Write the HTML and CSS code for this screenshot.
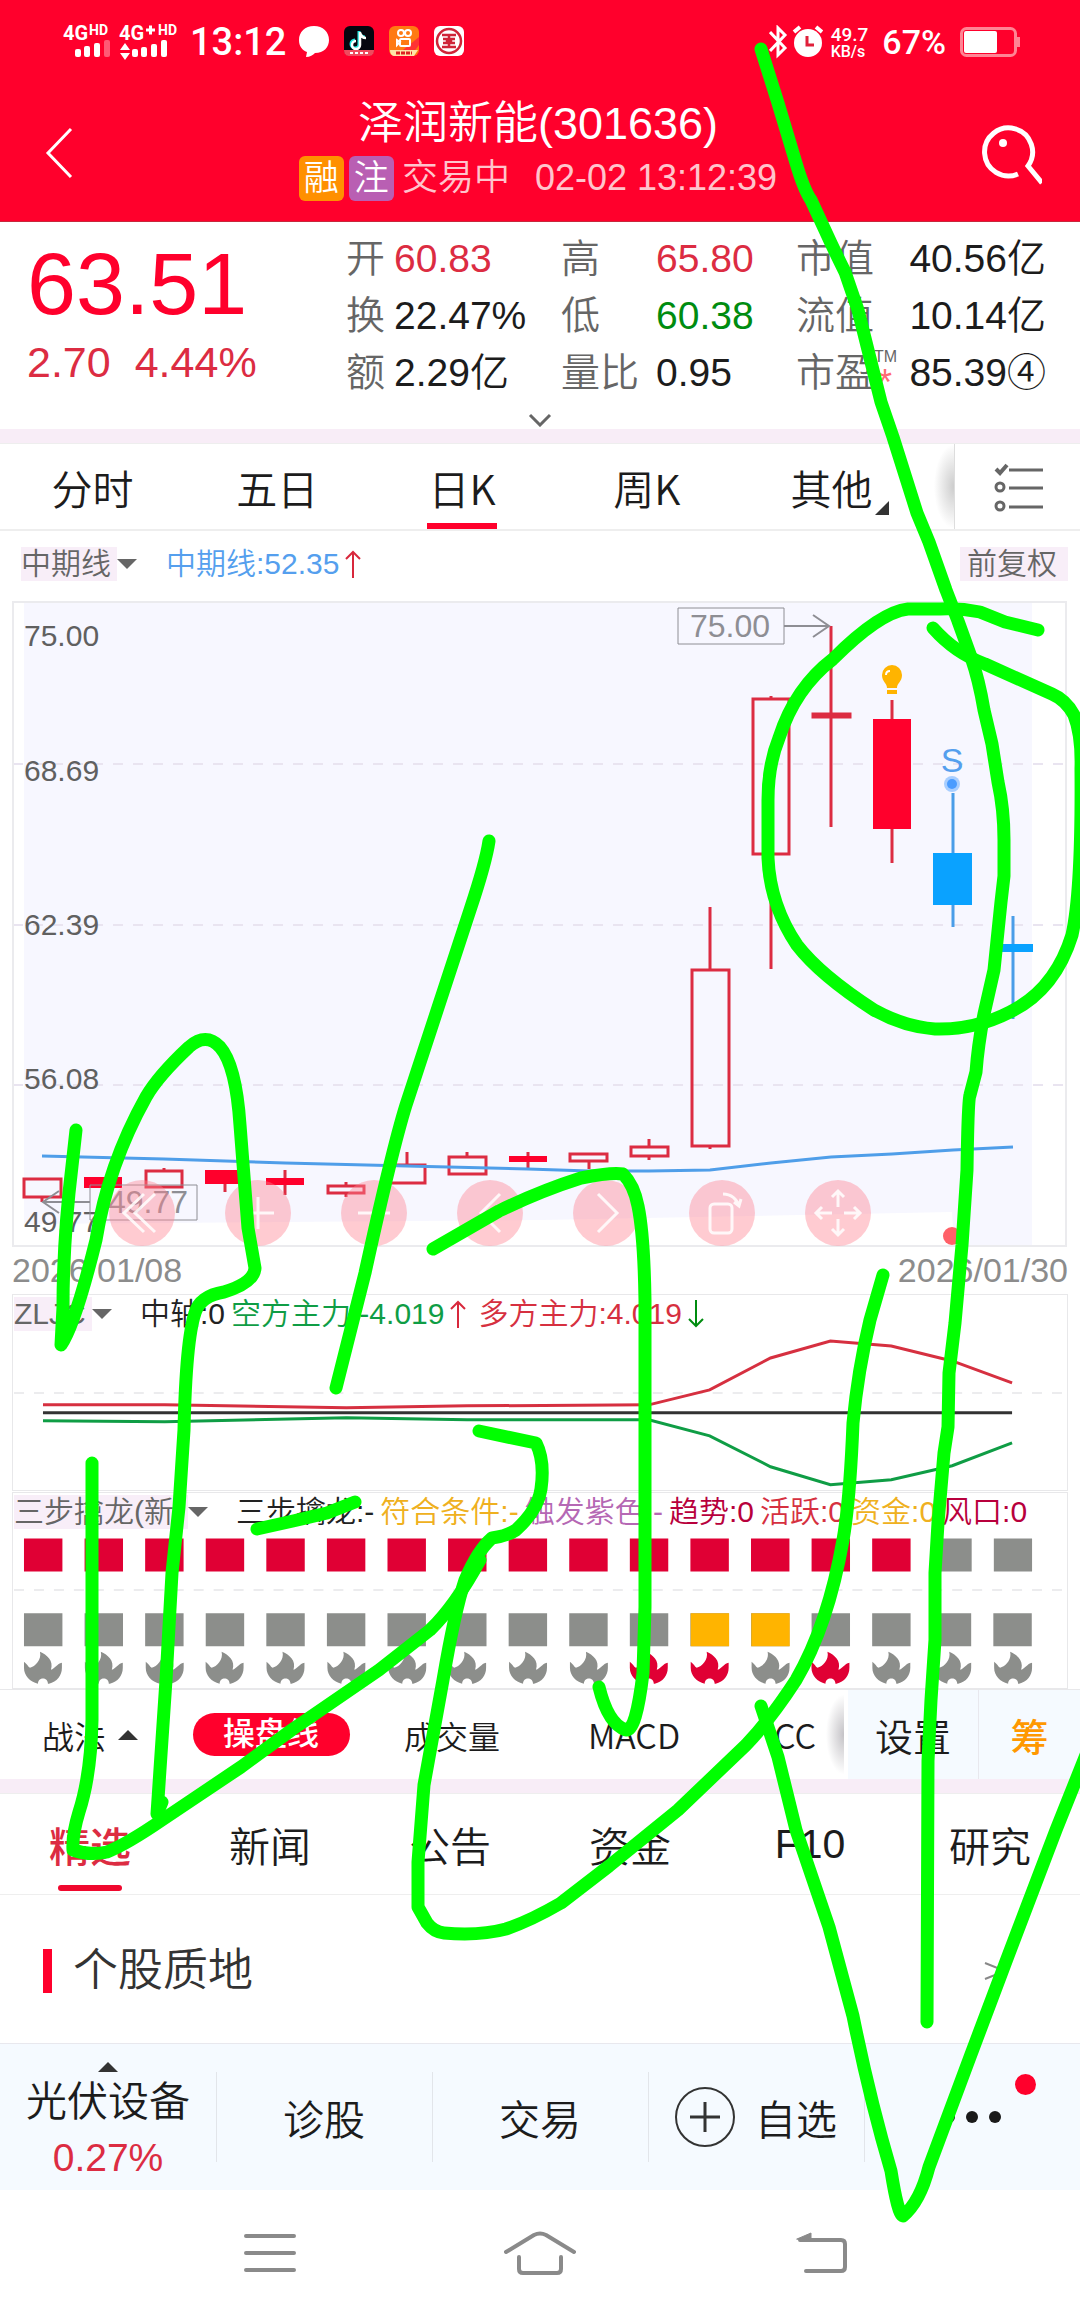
FILE: index.html
```
<!DOCTYPE html>
<html lang="zh-CN">
<head>
<meta charset="utf-8">
<meta name="viewport" content="width=device-width, initial-scale=1">
<title>泽润新能(301636)</title>
<link rel="stylesheet" href="styles.css">
</head>
<body>
<div class="app">
  <header class="header">
    <div class="status">
      <svg class="signal" width="122" height="48" viewBox="0 -6 122 48" fill="#fff">
        <text class="net" x="1" y="16">4G</text><text class="hd" x="27" y="11">HD</text>
        <rect x="13" y="25" width="6" height="8" rx="2"/><rect x="22" y="22" width="6" height="11" rx="2"/><rect x="32" y="19" width="6" height="14" rx="2"/><rect x="42" y="16" width="6" height="17" rx="2" opacity=".35"/>
        <text class="net" x="57" y="16">4G</text><path d="M84 6h9M88.500 1.500v9" stroke="#fff" stroke-width="3"/><text class="hd" x="96" y="11">HD</text>
        <path d="M58 26l5-7 5 7zM58 29l5 7 5-7z"/>
        <rect x="70" y="25" width="6" height="8" rx="2"/><rect x="79" y="23" width="6" height="10" rx="2"/><rect x="89" y="20" width="6" height="13" rx="2"/><rect x="99" y="16" width="6" height="17" rx="2"/>
      </svg>
      <span class="clock">13:12</span>
      <svg class="apps" width="168" height="34" viewBox="0 0 168 34">
        <path fill="#fff" d="M16 1C7 1 1 7 1 15c0 6 3 10 8 12l-1 5c4 0 7-2 9-4 9 0 14-6 14-13C31 7 25 1 16 1z"/>
        <rect x="46" y="1" width="30" height="30" rx="6" fill="#060610"/>
        <path d="M61 6v13a4 4 0 1 1-4-4M61 7c1 3 3 5 6 5" fill="none" stroke="#24e5e0" stroke-width="3"/>
        <path d="M62 7v13a4 4 0 1 1-4-4M62 8c1 3 3 5 6 5" fill="none" stroke="#fff" stroke-width="2.500"/>
        <path d="M46 25h30c0 4-2 6-6 6H52c-4 0-6-2-6-6z" fill="#f04a5e"/><path d="M52 28h18" stroke="#fff" stroke-width="2" stroke-dasharray="3 2"/>
        <rect x="91" y="1" width="30" height="30" rx="6" fill="#ff7a12"/><path d="M105 25l16-13v8l-6 8z" fill="#f33"/>
        <g fill="none" stroke="#fff" stroke-width="2"><circle cx="103" cy="8" r="3"/><circle cx="110" cy="8" r="3"/><rect x="102" y="14" width="10" height="7" rx="1"/><path d="M102 17l-3-2v5z"/></g>
        <path d="M92 25h28l-4 6H97c-3 0-5-2-5-6z" fill="#ffe3a8"/><path d="M98 28h16" stroke="#d22" stroke-width="3" stroke-dasharray="4 1"/>
        <rect x="136" y="1" width="30" height="30" rx="6" fill="#fff"/>
        <g fill="none" stroke="#cf2438" stroke-width="2.500"><circle cx="151" cy="16" r="12"/><path d="M144 10h14M144 22h14M151 10v12M145 14h4v4h-4M157 14h-4v4h4"/></g>
      </svg>
      <svg class="bt" width="54" height="34" viewBox="0 0 54 34" fill="none" stroke="#fff" stroke-width="3">
        <path d="M1 7l15 16-7 7V3l7 7L1 26"/>
        <circle cx="39" cy="18" r="14" fill="#fff" stroke="none"/><path d="M25 7l6-5M53 7l-6-5" stroke-width="4"/><path d="M38 11v9h7" stroke="#e0203a"/>
      </svg>
      <span class="speed"><span>49.7</span><span class="unit">KB/s</span></span>
      <span class="percent">67%</span>
      <svg class="battery" width="60" height="30" viewBox="0 0 60 30"><rect x="1.500" y="1.500" width="54" height="27" rx="5" fill="none" stroke="#ff8494" stroke-width="3"/><rect x="4" y="4" width="33" height="22" rx="2" fill="#fff"/><rect x="57" y="10" width="3" height="10" fill="#ff8494"/></svg>
    </div>
    <div class="titlebar">
      <button class="back" aria-label="返回"><svg width="28" height="52" viewBox="0 0 28 52"><path d="M26 2L3 26l23 24" fill="none" stroke="#fff" stroke-width="3"/></svg></button>
      <div class="title">
        <h1>泽润新能(301636)</h1>
        <p><i class="tag margin">融</i><i class="tag reg">注</i><span>交易中</span><time>02-02 13:12:39</time></p>
      </div>
      <button class="search" aria-label="搜索"><svg width="60" height="62" viewBox="0 0 60 62" fill="none" stroke="#fff" stroke-width="5"><path d="M36 51a24 24 0 1 1 10-8l14 17"/><circle cx="21" cy="20" r="4" fill="#fff" stroke="none"/></svg></button>
    </div>
  </header>

  <section class="quote">
    <div class="price"><strong>63.51</strong><p><span>2.70</span><span>4.44%</span></p></div>
    <dl class="facts">
      <div><dt>开</dt><dd class="up">60.83</dd></div>
      <div><dt>高</dt><dd class="up">65.80</dd></div>
      <div><dt>市值</dt><dd>40.56亿</dd></div>
      <div><dt>换</dt><dd>22.47%</dd></div>
      <div><dt>低</dt><dd class="down">60.38</dd></div>
      <div><dt>流值</dt><dd>10.14亿</dd></div>
      <div><dt>额</dt><dd>2.29亿</dd></div>
      <div><dt>量比</dt><dd>0.95</dd></div>
      <div><dt>市盈<span class="mark"><span>TM</span><b>*</b></span></dt><dd>85.39④</dd></div>
    </dl>
    <button class="expand" aria-label="展开"><svg width="24" height="14" viewBox="0 0 24 14"><path d="M2 2l10 10L22 2" fill="none" stroke="#666" stroke-width="3"/></svg></button>
  </section>

  <nav class="periods">
    <div class="period-list">
      <button>分时</button><button>五日</button><button class="on">日K</button><button>周K</button><button class="more">其他</button>
    </div>
    <button class="list" aria-label="指标列表"><svg width="50" height="50" viewBox="0 0 50 50" fill="none" stroke="#666" stroke-width="3"><path d="M2 7l4 4 7-8" stroke-width="4"/><circle cx="6" cy="25" r="4"/><circle cx="6" cy="44" r="4"/><path d="M15 8h34M15 26h34M15 45h34" /></svg></button>
  </nav>

  <main>
    <div class="legend main-legend">
      <button class="pick">中期线</button><i class="caret"></i>
      <span class="blue ma">中期线:52.35<svg class="arrow rise" width="16" height="28" viewBox="0 0 16 28"><path d="M8 28V2M1 9l7-7 7 7"/></svg></span>
      <button class="adjust">前复权</button>
    </div>
    <div class="chart">
      <svg class="plot" viewBox="0 600 1080 648" fill="none">
        <path d="M24 602H1032V1246H954L952 1212 540 1220 24 1224z" fill="#f7f7ff"/>
        <path d="M13 764H1066M13 925H1066M13 1085H1066" stroke="#e9e4f0" stroke-width="2" stroke-dasharray="10 10"/>
        <rect x="13" y="602" width="1053" height="644" stroke="#ebebee" stroke-width="2"/>
        <g stroke="#dc2c42" stroke-width="3">
          <path d="M42 1198v4M103 1188v8M164 1168v2M225 1183v9M285 1170v25M346 1182v3M346 1193v4M407 1152v13M467 1152v4M528 1152v16M589 1161v8M649 1139v7M649 1157v3M710 907v62M710 1146v3M771 696v3M771 854v115M831 626v201M892 700v163"/>
          <path d="M24 1179h37v18H24zM146 1171h36v16h-36zM328 1186h36v7h-36zM389 1165h36v18h-36zM449 1157h37v17h-37zM570 1154h37v7h-37zM631 1147h37v9h-37zM692 970h37v176h-37zM753 699h36v155h-36zM813 714h37v3h-37z"/>
        </g>
        <path d="M84 1177h38v11H84zM205 1170h39v14h-39zM266 1178h38v7h-38zM509 1156h38v6h-38zM873 719h38v110h-38z" fill="#ff002c"/>
        <path d="M953 793v134M1013 916v103" stroke="#4a9de8" stroke-width="3"/>
        <path d="M933 853h39v52h-39zM994 944h39v8h-39z" fill="#0aa2ff"/>
        <path d="M42 1156L164 1159 285 1163 407 1166 528 1169 589 1171 649 1171 710 1170 771 1163 831 1157 892 1154 953 1150 1013 1147" stroke="#4f9ee9" stroke-width="3"/>
        <g fill="#606060" class="axis"><text x="24" y="646">75.00</text><text x="24" y="781">68.69</text><text x="24" y="935">62.39</text><text x="24" y="1089">56.08</text><text x="24" y="1232">49.77</text></g>
        <g stroke="#8e8e94" stroke-width="2"><path d="M678 608h106v36H678zM90 1185h107v35H90z" stroke-width="1"/><path d="M784 626h44M813 615l16 11-16 11M90 1202H44M59 1191l-16 11 16 11"/></g>
        <g fill="#8e8e94" class="mark-text"><text x="690" y="637">75.00</text><text x="108" y="1213">49.77</text></g>
        <path d="M887 688c0-5-5-6-5-13a10 10 0 0 1 20 0c0 7-5 8-5 13zM887 690h10v4h-10z" fill="#ffb400"/><path d="M886 675c0-3 2-4 4-4" stroke="#fff" stroke-width="2"/>
        <text x="952" y="772" class="sell" text-anchor="middle" fill="#559fee">S</text>
        <circle cx="952" cy="784" r="8" fill="#a8ceff"/><circle cx="952" cy="784" r="5" fill="#4a9cff"/>
        <circle cx="952" cy="1236" r="9" fill="#ff6068"/>
      </svg>
      <div class="tools">
        <button aria-label="快退"><svg viewBox="0 0 66 66"><path d="M35 14L15 33l20 19M46 14L26 33l20 19"/></svg></button>
        <button aria-label="放大"><svg viewBox="0 0 66 66"><path d="M33 17v32M17 33h32"/></svg></button>
        <button aria-label="缩小"><svg viewBox="0 0 66 66"><path d="M17 33h32"/></svg></button>
        <button aria-label="左移"><svg viewBox="0 0 66 66"><path d="M43 14L24 33l19 19"/></svg></button>
        <button aria-label="右移"><svg viewBox="0 0 66 66"><path d="M25 14l19 19-19 19"/></svg></button>
        <button aria-label="旋转"><svg viewBox="0 0 66 66"><rect x="21" y="24" width="22" height="29" rx="4"/><path d="M34 14c8 0 14 5 16 12M45 22l5 4 2-7"/></svg></button>
        <button aria-label="全屏"><svg viewBox="0 0 66 66"><path d="M33 27V11M27 17l6-6 6 6M33 39v16M27 49l6 6 6-6M27 33H11M17 27l-6 6 6 6M39 33h16M49 27l6 6-6 6"/></svg></button>
      </div>
    </div>
    <div class="dates"><time>2026/01/08</time><time>2026/01/30</time></div>

    <section class="panel">
      <div class="legend">
        <button class="pick zljc">ZLJC</button><i class="caret"></i>
        <span class="first">中轴:0</span><span class="green">空方主力:-4.019<svg class="arrow rise" width="16" height="28" viewBox="0 0 16 28"><path d="M8 28V2M1 9l7-7 7 7"/></svg></span><span class="red wide">多方主力:4.019<svg class="arrow fall" width="16" height="28" viewBox="0 0 16 28"><path d="M8 0v26M1 19l7 7 7-7"/></svg></span>
      </div>
      <svg class="plot" viewBox="12 1332 1056 158" fill="none" stroke-width="3">
        <path d="M13 1393H1066" stroke="#ececee" stroke-width="2" stroke-dasharray="10 10"/>
        <path d="M42 1405L164 1405 225 1406 346 1408 467 1406 649 1405 710 1390 771 1358 831 1341 892 1346 953 1361 1013 1383" stroke="#d63040"/>
        <path d="M42 1413H1013" stroke="#333"/>
        <path d="M42 1421L164 1422 346 1418 467 1420 649 1420 710 1436 771 1467 831 1485 892 1480 953 1466 1013 1443" stroke="#0f9d45"/>
      </svg>
    </section>

    <section class="panel">
      <div class="legend">
        <button class="pick dragon">三步擒龙(新</button><i class="caret"></i>
        <span class="first">三步擒龙:-</span><span class="gold">符合条件:-</span><span class="violet">触发紫色:-</span><span class="wine">趋势:0</span><span class="red">活跃:0</span><span class="gold">资金:0</span><span class="wine">风口:0</span>
      </div>
      <svg class="plot" viewBox="12 1530 1056 156">
        <defs><path id="flame" d="M0 10C3 12 4 15 6 16 11 15 18 8 16 0c7 3 14 9 11 18 4-1 6-6 11-7v5c0 8-5 14-13 16h-1c0-7-10-7-10 0C6 30 0 24 0 16z"/></defs>
        <path d="M13 1590H1066" stroke="#ececee" stroke-width="2" stroke-dasharray="10 10"/>
        <g stroke-width="33">
          <path d="M23 1555H912" stroke="#e00034" stroke-dasharray="38.500 22.200"/>
          <path d="M934 1555H1033M23 1630H1033" stroke="#8c8e8b" stroke-dasharray="38.500 22.200"/>
          <path d="M691 1630H791" stroke="#ffb400" stroke-dasharray="38.500 22.200"/>
        </g>
        <g fill="#8c8e8b"><use href="#flame" x="23" y="1652"/><use href="#flame" x="84" y="1652"/><use href="#flame" x="145" y="1652"/><use href="#flame" x="205" y="1652"/><use href="#flame" x="266" y="1652"/><use href="#flame" x="327" y="1652"/><use href="#flame" x="388" y="1652"/><use href="#flame" x="448" y="1652"/><use href="#flame" x="509" y="1652"/><use href="#flame" x="570" y="1652"/><use href="#flame" x="752" y="1652"/><use href="#flame" x="873" y="1652"/><use href="#flame" x="934" y="1652"/><use href="#flame" x="995" y="1652"/></g>
        <g fill="#e00034"><use href="#flame" x="630" y="1652"/><use href="#flame" x="691" y="1652"/><use href="#flame" x="812" y="1652"/></g>
      </svg>
    </section>
  </main>

  <nav class="indicators">
    <div class="ind-list">
      <button class="tactic">战法<i class="caret-up"></i></button><button><b>操盘线</b></button><button>成交量</button><button class="latin">MACD</button><button class="latin cut">CC</button>
    </div>
    <button class="setting">设置</button><button class="chip">筹</button>
  </nav>

  <nav class="content-tabs"><button class="on">精选</button><button>新闻</button><button>公告</button><button>资金</button><button>F10</button><button>研究</button></nav>

  <section class="quality"><h2>个股质地</h2><a href="#quality" aria-label="更多"><svg width="24" height="18" viewBox="0 0 24 18"><path d="M1 1l20 8-20 8" fill="none" stroke="#888" stroke-width="2"/></svg></a></section>

  <nav class="actions">
    <button class="sector"><i class="caret-up"></i><span>光伏设备</span><em>0.27%</em></button>
    <button>诊股</button><button>交易</button>
    <button class="fav"><svg width="60" height="60" viewBox="0 0 60 60" fill="none" stroke="#333" stroke-width="2"><circle cx="30" cy="30" r="29"/><path d="M15 30h30M30 15v30" stroke-width="3"/></svg>自选</button>
    <button class="dots" aria-label="更多"><svg width="58" height="12" viewBox="0 0 58 12" fill="#1a1a1a"><circle cx="6" cy="6" r="6"/><circle cx="29" cy="6" r="6"/><circle cx="52" cy="6" r="6"/></svg><i class="badge"></i></button>
  </nav>

  <footer class="sysnav">
    <button aria-label="最近任务"><svg width="52" height="40" viewBox="0 0 52 40"><path d="M2 3h48M2 20h48M2 37h48"/></svg></button>
    <button aria-label="主页"><svg width="72" height="46" viewBox="0 0 72 46"><path d="M2 22L30 5q6-3 12 0l28 17M15 27v12q0 4 4 4h34q4 0 4-4V27"/></svg></button>
    <button aria-label="返回"><svg width="52" height="44" viewBox="0 0 52 44"><path d="M4 9h41q4 0 4 4v23q0 4-4 4H10"/><path d="M1 8L15 2v7z" fill="#8a8a8a" stroke-width="1"/></svg></button>
  </footer>

  <svg class="ink" viewBox="0 0 1080 2316" preserveAspectRatio="none" aria-hidden="true">
    <path d="M761 49L778 103 796 163Q804 190 811 200L824 228Q834 250 845 272L858 310 881 402 893 437 917 513 929 542 946 590 958 621 971 657Q979 680 984 710L992 744 998 782Q1004 809 1004 840V876L1001 902 994 970 984 1014Q978 1045 976 1072L970 1095Q968 1100 967 1170L962 1245 955 1323 949 1373 948 1427 944 1453 938 1523 935 1573V1640L931 1700 928 1761 927 2022"/>
    <path d="M1038 630L1005 622 980 612Q960 608 940 609H908Q880 612 833 659Q795 688 779 738Q768 765 768 800V858Q770 905 797 945Q820 975 874 1010Q905 1027 935 1029Q975 1030 1010 1012Q1055 990 1072 935Q1082 890 1081 769Q1082 735 1074 715Q1066 700 1052 694L985 664Q955 653 933 628"/>
    <path d="M76 1130L72 1166Q63 1240 63 1307L61 1345Q75 1325 96 1240Q108 1165 146 1097Q158 1076 189 1047Q206 1032 220 1047Q236 1065 240 1125L248 1228 255 1268Q254 1283 224 1292Q200 1296 195 1313Q186 1340 184 1430L179 1507 172 1573 166 1680 157 1814 162 1802"/>
    <path d="M92 1463V1720Q91 1775 79 1812Q72 1835 73 1850Q90 1856 107 1852 127 1844 162 1820L241 1767 293 1729 379 1670 430 1630Q455 1606 480 1560"/>
    <path d="M479 1431L536 1443Q545 1461 541 1489Q538 1510 516 1530Q507 1536 492 1538Q478 1550 465 1580Q455 1610 443 1680L424 1785 418 1862V1907L427 1923Q434 1932 444 1933Q480 1936 506 1929Q530 1921 561 1903L609 1866 678 1810 746 1745Q770 1720 796 1680Q828 1625 843 1540Q850 1500 853 1423Q858 1370 870 1320L883 1275"/>
    <path d="M433 1249L499 1211Q540 1191 581 1178Q612 1172 623 1174Q634 1185 638 1206 644 1235 645 1300V1607L643 1673Q636 1732 626 1730Q608 1724 599 1687"/>
    <path d="M489 841Q486 862 470 910L406 1105Q392 1150 365 1273L336 1388M257 1529L293 1521 327 1513 355 1502"/>
    <path d="M761 1706L778 1757 796 1830 829 1927 853 2016Q870 2100 891 2171Q898 2215 903 2216Q920 2202 929 2167L970 2057 1005 1964 1056 1830 1086 1755"/>
  </svg>
</div>
</body>
</html>
```
FILE: styles.css
```
* { box-sizing: border-box; margin: 0; padding: 0; }
body { background: #fff; color: #1c1c1c; font-family: "Liberation Sans", "Noto Sans CJK SC", sans-serif; font-weight: 350; }
button { background: none; border: 0; color: inherit; font: inherit; white-space: nowrap; }
i, em { font-style: normal; }
svg { display: block; flex: none; }
.app { position: relative; overflow: hidden; background: #fff; }

/* header */
.header { background: #ff002c; color: #fff; height: 222px; border-bottom: 1px solid #c8283c; }
.status { display: flex; align-items: center; height: 84px; padding: 0 60px 0 62px; font-family: Roboto, sans-serif; font-weight: 500; }
.net { font: 700 20px Roboto, sans-serif; }
.hd { font: 700 14px Roboto, sans-serif; }
.clock { font-size: 38px; margin: 0 12px 0 6px; }
.bt { margin-left: auto; }
.speed { display: flex; flex-direction: column; font-size: 19px; line-height: 19px; margin: 0 14px 0 8px; }
.unit { font-size: 16px; line-height: 16px; }
.percent { font-size: 34px; margin-right: 14px; }
.titlebar { display: flex; justify-content: space-between; align-items: flex-start; padding: 9px 38px 0 45px; height: 138px; }
.title { text-align: center; }
.back { width: 49px; padding-top: 34px; }
.search { padding-top: 30px; }
.title h1 { font-size: 45px; font-weight: 350; line-height: 62px; }
.title p { display: flex; align-items: center; justify-content: center; gap: 5px; font-size: 36px; line-height: 46px; color: #ffc4cc; }
.title time { margin-left: 20px; }
.tag { width: 45px; height: 45px; border-radius: 6px; color: #fff; line-height: 44px; font-size: 35px; }
.margin { background: #ff9000; }
.reg { background: #b95fb3; }
.title .tag + span { margin-left: 3px; }

/* quote */
.quote { display: grid; grid-template-columns: 346px 1fr; align-content: start; row-gap: 12px; padding: 8px 34px 0 0; height: 221px; border-bottom: 14px solid #f8edf7; }
.price { padding: 3px 0 0 27px; color: #ff002c; }
.price strong { display: block; font-size: 88px; line-height: 102px; font-weight: 400; }
.price p { display: flex; gap: 24px; font-size: 43px; line-height: 54px; color: #dc2c42; }
.facts { display: grid; grid-template-columns: 215px 235px 1fr; font-size: 39px; line-height: 57px; }
.facts div { display: flex; height: 57px; }
.facts dt { min-width: 48px; color: #666; display: flex; }
.facts div:nth-child(3n+2) dt { min-width: 95px; }
.facts div:nth-child(3n) { justify-content: space-between; }
.up { color: #dc2c42; }
.down { color: #008c10; }
.mark { display: flex; flex-direction: column; font-size: 16px; line-height: 16px; padding-top: 5px; }
.mark b { color: #ff6a74; font-size: 36px; line-height: 36px; font-weight: 400; padding-left: 4px; }
.expand { grid-column: 1 / -1; justify-self: center; margin-left: 34px; }

/* period tabs */
.periods { display: flex; height: 88px; border-top: 1px solid #eee; border-bottom: 2px solid #eee; }
.period-list { flex: 1; display: grid; grid-template-columns: repeat(5, 1fr); padding-right: 30px; background: radial-gradient(ellipse 20px 42px at right center, #ccc, #fff); font-family: "Noto Sans CJK SC", sans-serif; font-size: 41px; line-height: 60px; }
.period-list button { position: relative; }
.periods .on::after { content: ""; position: absolute; bottom: 0; left: calc(50% - 35px); width: 70px; height: 6px; background: #ff002c; }
.more::after { content: ""; position: absolute; right: 35px; bottom: 14px; border-left: 14px solid transparent; border-bottom: 14px solid #333; }
.list { width: 126px; padding-left: 39px; border-left: 1px solid #ddd; }

/* legends */
.legend { display: flex; align-items: center; gap: 6px; height: 37px; font-size: 30px; line-height: 34px; white-space: nowrap; }
.legend span { display: flex; align-items: center; }
.pick, .adjust { background: #f8eef8; color: #666; height: 34px; line-height: 34px; text-align: left; }
.caret { border: 10px solid transparent; border-top-color: #666; border-bottom: 0; margin-left: -6px; }
.caret-up { border: 10px solid transparent; border-bottom-color: #333; border-top: 0; }
.arrow { fill: none; stroke-width: 2; margin-left: 6px; }
.rise { stroke: #d8283c; }
.fall { stroke: #008c10; }
.main-legend { height: 69px; padding: 0 12px 4px 21px; }
.main-legend .pick { width: 96px; }
.adjust { width: 108px; padding-left: 7px; margin-left: auto; }
.ma { margin-left: 23px; }
.blue { color: #559fee; }
.green { color: #0f9d45; }
.red { color: #d63040; }
.gold { color: #efb020; }
.violet { color: #b568b4; }
.wine { color: #b8003c; }
.zljc { width: 78px; }
.dragon { width: 174px; }
.first { margin-left: 22px; color: #222; }
.wide { margin-left: 6px; }

/* charts */
.chart { position: relative; }
.plot { width: 100%; height: auto; }
.axis { font-size: 30px; }
.mark-text { font-size: 32px; }
.sell { font-size: 34px; }
.tools { position: absolute; left: 109px; bottom: 2px; display: flex; gap: 50px; }
.tools button { width: 66px; height: 66px; border-radius: 50%; background: rgba(255, 130, 145, .42); }
.tools svg { fill: none; stroke: #fff; stroke-opacity: .85; stroke-width: 3; }
.dates { display: flex; justify-content: space-between; padding: 0 12px; font-size: 34px; line-height: 44px; padding-bottom: 2px; color: #8c8c8c; }
.panel { margin: 0 12px; border: 1px solid #e8e8ea; height: 197px; overflow: hidden; }
.panel .legend { padding-left: 1px; }
.panel + .panel { margin-top: 1px; }

/* indicator tabs */
.indicators { display: flex; height: 104px; border-top: 1px solid #e8e8ea; border-bottom: 14px solid #f8edf7; font-size: 32px; }
.ind-list { flex: 1; display: grid; grid-template-columns: 180px 182px 180px 184px 1fr; background: radial-gradient(ellipse 18px 40px at right center, #c4c2c6, #fff); overflow: hidden; }
.tactic { display: flex; align-items: center; gap: 12px; padding-left: 42px; }
.indicators b { display: inline-block; width: 157px; height: 43px; border-radius: 22px; background: #ff002c; color: #fff; line-height: 43px; font-weight: 500; }
.latin { font-family: "Noto Sans CJK SC", sans-serif; font-size: 34px; }
.cut { text-align: left; padding-left: 48px; }
.setting { width: 131px; background: #f5faff; font-size: 38px; border-right: 1px solid #e8e8ee; margin-left: 4px; }
.chip { width: 101px; background: #f5faff; font-size: 38px; color: #ff9800; font-weight: 500; }

.content-tabs { display: grid; grid-template-columns: repeat(6, 1fr); height: 102px; border-top: 1px solid #eee; border-bottom: 1px solid #eee; font-size: 41px; }
.content-tabs button { position: relative; }
.content-tabs .on { color: #dc2c42; font-weight: 500; }
.content-tabs .on::after { content: ""; position: absolute; left: calc(50% - 32px); bottom: 3px; width: 64px; height: 6px; border-radius: 3px; background: #f0082e; }

.quality { display: flex; align-items: center; justify-content: space-between; height: 148px; padding: 4px 72px 0 43px; }
.quality h2 { font-size: 45px; font-weight: 350; line-height: 44px; padding-left: 21px; border-left: 9px solid #ff002c; color: #333; }

/* bottom actions */
.actions { display: grid; grid-template-columns: repeat(5, 1fr); height: 147px; background: #f5faff; border-top: 1px solid #e8e8ee; font-size: 41px; }
.actions button { position: relative; display: flex; align-items: center; justify-content: center; }
.actions button + button::before { content: ""; position: absolute; left: 0; top: 28px; height: 90px; border-left: 1px solid #e2e5ea; }
.actions .sector { flex-direction: column; line-height: 56px; padding-top: 14px; }
.sector .caret-up { margin-bottom: 2px; }
.sector em { color: #dc2c42; font-size: 39px; }
.fav { gap: 20px; }
.badge { position: absolute; right: 44px; top: 30px; width: 21px; height: 21px; border-radius: 50%; background: #ff002c; }

.sysnav { display: grid; grid-template-columns: repeat(3, 1fr); justify-items: center; align-items: center; padding: 0 12.5%; height: 126px; }
.sysnav button:last-child { padding-left: 24px; }
.sysnav svg { fill: none; stroke: #8a8a8a; stroke-width: 4; stroke-linecap: round; stroke-linejoin: round; }

/* freehand annotation over the whole screen */
.ink { position: absolute; inset: 0; width: 100%; height: 100%; pointer-events: none; fill: none; stroke: #0f0; stroke-width: 13; stroke-linecap: round; stroke-linejoin: round; }
```
